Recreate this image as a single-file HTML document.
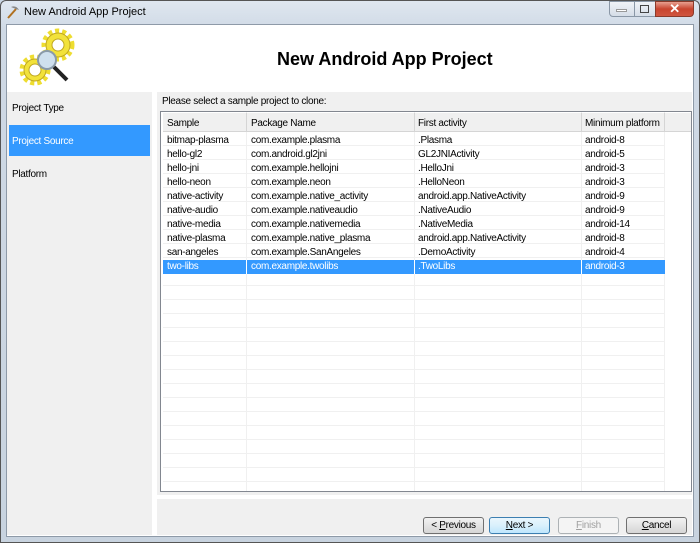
<!DOCTYPE html><html><head><style>
*{margin:0;padding:0;box-sizing:border-box}
body{width:700px;height:543px;background:#c9d6e4;font-family:"Liberation Sans",sans-serif;font-size:10px;letter-spacing:-0.3px;position:relative;overflow:hidden}
.a{position:absolute}
.row{position:absolute;left:0;height:14px;width:503px}
.row span{position:absolute;top:2px;white-space:nowrap}
.btn{position:absolute;top:517px;height:17px;width:61px;border:1px solid #707070;border-radius:3px;background:linear-gradient(#f2f2f2,#e4e4e4 50%,#d6d6d6);text-align:center;line-height:15px;font-size:10px}
</style></head><body>
<div class="a" style="left:0;top:0;width:700px;height:543px;background:linear-gradient(#dfe7f0,#cfd9e5 30px,#c8d3df);border:1px solid #555;border-radius:6px 6px 0 0"></div>
<svg class="a" style="left:5px;top:4px" width="16" height="16"><path d="M3 14 L11 5" stroke="#b07020" stroke-width="2"/><path d="M6 3 Q11 1 14 6 L11 5 Z" fill="#888"/></svg>
<div class="a" style="left:24px;top:6px;font-size:11px;letter-spacing:0;color:#000">New Android App Project</div>
<div class="a" style="left:609px;top:1px;width:26px;height:16px;border:1px solid #8a97a6;border-radius:0 0 0 4px;background:linear-gradient(#f0f3f7,#d5dde7)"></div>
<div class="a" style="left:616px;top:9px;width:11px;height:3px;border:1px solid #999;background:#fff"></div>
<div class="a" style="left:634px;top:1px;width:22px;height:16px;border:1px solid #8a97a6;background:linear-gradient(#f0f3f7,#d5dde7)"></div>
<div class="a" style="left:640px;top:5px;width:9px;height:8px;border:1px solid #444"></div>
<div class="a" style="left:655px;top:1px;width:39px;height:16px;border:1px solid #8a3a2a;border-radius:0 0 4px 0;background:linear-gradient(#e8a090,#c8452f 50%,#d0553f);color:#fff;font-weight:bold;text-align:center;line-height:14px;font-size:13px">✕</div>
<div class="a" style="left:6px;top:24px;width:688px;height:513px;background:#fff;border:1px solid #8e9aa8"></div>
<svg class="a" style="left:18px;top:27px" width="62" height="62">
<g fill="none" stroke="#eedd30" stroke-width="5" stroke-dasharray="4 3">
<circle cx="40" cy="18" r="14"/><circle cx="17" cy="43" r="13"/></g>
<g fill="#f2e23a" stroke="#c0a820" stroke-width="1">
<circle cx="40" cy="18" r="12"/><circle cx="17" cy="43" r="11"/></g>
<circle cx="40" cy="18" r="6" fill="#fff" stroke="#c0a820"/><circle cx="17" cy="43" r="6" fill="#fff" stroke="#c0a820"/>
<circle cx="29" cy="33" r="9" fill="#cfe0ee" stroke="#8a9aa8" stroke-width="2"/>
<path d="M36 40 L49 53" stroke="#222" stroke-width="4"/></svg>
<div class="a" style="left:277px;top:49px;font-size:18px;letter-spacing:0;font-weight:bold">New Android App Project</div>
<div class="a" style="left:7px;top:92px;width:145px;height:443px;background:#f0f0f0"></div>
<div class="a" style="left:12px;top:103px">Project Type</div>
<div class="a" style="left:9px;top:125px;width:141px;height:31px;background:#3399ff"></div>
<div class="a" style="left:12px;top:136px;color:#fff">Project Source</div>
<div class="a" style="left:12px;top:169px">Platform</div>
<div class="a" style="left:157px;top:92px;width:535px;height:403px;background:#f0f0f0"></div>
<div class="a" style="left:162px;top:96px">Please select a sample project to clone:</div>
<div class="a" style="left:160px;top:111px;width:532px;height:381px;border:1px solid #828790;background:#fff;overflow:hidden">
<div class="a" style="left:2px;top:1px;width:528px;height:19px;background:#f0f0f0;border-bottom:1px solid #d5d5d5"></div>
<div class="a" style="left:2px;top:20px;width:502px;height:360px;background:repeating-linear-gradient(#fff 0 13px,#f0f0f0 13px 14px)"></div>
<div class="a" style="left:85px;top:0;width:1px;height:380px;background:#f0f0f0"></div>
<div class="a" style="left:253px;top:0;width:1px;height:380px;background:#f0f0f0"></div>
<div class="a" style="left:420px;top:0;width:1px;height:380px;background:#f0f0f0"></div>
<div class="a" style="left:503px;top:0;width:1px;height:380px;background:#f0f0f0"></div>
<div class="a" style="left:85px;top:1px;width:1px;height:19px;background:#d5d5d5"></div>
<div class="a" style="left:253px;top:1px;width:1px;height:19px;background:#d5d5d5"></div>
<div class="a" style="left:420px;top:1px;width:1px;height:19px;background:#d5d5d5"></div>
<div class="a" style="left:503px;top:1px;width:1px;height:19px;background:#d5d5d5"></div>
<div class="row" style="top:4px"><span style="left:6px">Sample</span><span style="left:90px">Package Name</span><span style="left:257px">First activity</span><span style="left:424px">Minimum platform</span></div>
<div class="row" style="top:148px;left:2px;width:502px;background:#3399ff"></div>
<div class="a" style="left:85px;top:148px;width:1px;height:14px;background:#fff"></div>
<div class="a" style="left:253px;top:148px;width:1px;height:14px;background:#fff"></div>
<div class="a" style="left:420px;top:148px;width:1px;height:14px;background:#fff"></div>
<div class="row" style="top:21px"><span style="left:6px">bitmap-plasma</span><span style="left:90px">com.example.plasma</span><span style="left:257px">.Plasma</span><span style="left:424px">android-8</span></div>
<div class="row" style="top:35px"><span style="left:6px">hello-gl2</span><span style="left:90px">com.android.gl2jni</span><span style="left:257px">GL2JNIActivity</span><span style="left:424px">android-5</span></div>
<div class="row" style="top:49px"><span style="left:6px">hello-jni</span><span style="left:90px">com.example.hellojni</span><span style="left:257px">.HelloJni</span><span style="left:424px">android-3</span></div>
<div class="row" style="top:63px"><span style="left:6px">hello-neon</span><span style="left:90px">com.example.neon</span><span style="left:257px">.HelloNeon</span><span style="left:424px">android-3</span></div>
<div class="row" style="top:77px"><span style="left:6px">native-activity</span><span style="left:90px">com.example.native_activity</span><span style="left:257px">android.app.NativeActivity</span><span style="left:424px">android-9</span></div>
<div class="row" style="top:91px"><span style="left:6px">native-audio</span><span style="left:90px">com.example.nativeaudio</span><span style="left:257px">.NativeAudio</span><span style="left:424px">android-9</span></div>
<div class="row" style="top:105px"><span style="left:6px">native-media</span><span style="left:90px">com.example.nativemedia</span><span style="left:257px">.NativeMedia</span><span style="left:424px">android-14</span></div>
<div class="row" style="top:119px"><span style="left:6px">native-plasma</span><span style="left:90px">com.example.native_plasma</span><span style="left:257px">android.app.NativeActivity</span><span style="left:424px">android-8</span></div>
<div class="row" style="top:133px"><span style="left:6px">san-angeles</span><span style="left:90px">com.example.SanAngeles</span><span style="left:257px">.DemoActivity</span><span style="left:424px">android-4</span></div>
<div class="row" style="top:147px;color:#fff"><span style="left:6px">two-libs</span><span style="left:90px">com.example.twolibs</span><span style="left:257px">.TwoLibs</span><span style="left:424px">android-3</span></div>
</div>
<div class="a" style="left:157px;top:499px;width:535px;height:36px;background:#f0f0f0"></div>
<div class="btn" style="left:423px">&lt; <u>P</u>revious</div>
<div class="btn" style="left:489px;border-color:#3c7fb1;background:linear-gradient(#eaf6fd,#d9f0fc 50%,#bee6fd)"><u>N</u>ext &gt;</div>
<div class="btn" style="left:558px;border-color:#adb2b5;background:#f4f4f4;color:#a0a0a0"><u>F</u>inish</div>
<div class="btn" style="left:626px"><u>C</u>ancel</div>
</body></html>
